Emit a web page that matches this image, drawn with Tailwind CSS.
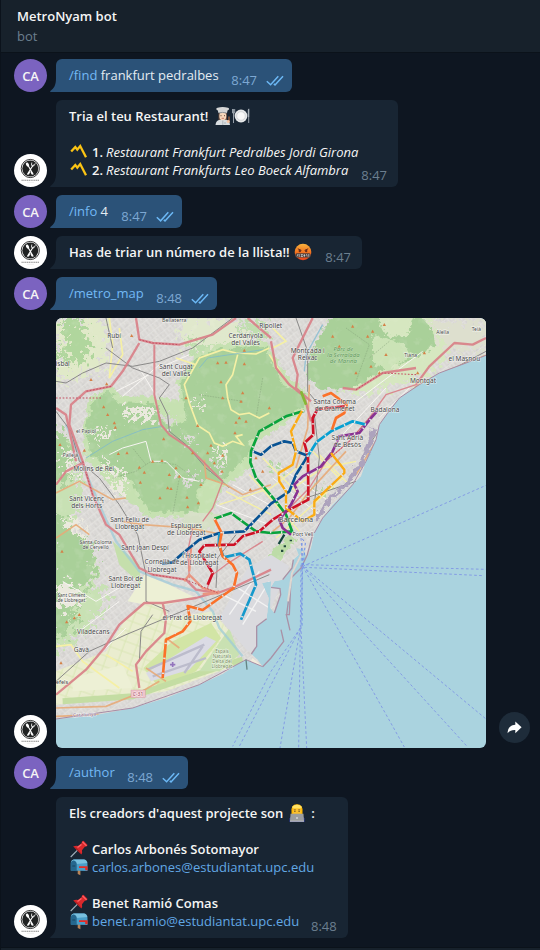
<!DOCTYPE html>
<html lang="ca">
<head>
<meta charset="utf-8">
<title>MetroNyam bot</title>
<script src="https://cdn.jsdelivr.net/npm/@tailwindcss/browser@4"></script>
</head>
<body class="bg-[#0e1621]">
<svg class="absolute size-0">
  <symbol id="tail" viewBox="0 0 6 14"><path d="M6 0V14H.6C-.2 14 0 13.2.6 12.8C4 10.500 6 7 6 0Z" fill="currentColor"/></symbol>
  <symbol id="checks" viewBox="0 0 18 11"><path d="M.8 6.200 4.600 9.800 12.300 1.200M7.800 8.900 9 9.900 17 1.200" fill="none" stroke="#6cb8f5" stroke-width="1.500"/></symbol>
  <symbol id="logo" viewBox="0 0 33 33">
    <circle cx="16.500" cy="16.500" r="16.500" fill="#fff"/>
    <circle cx="16.300" cy="14.500" r="9.100" fill="none" stroke="#252525" stroke-width=".9"/>
    <circle cx="16.300" cy="14.500" r="8" fill="#202222"/>
    <path d="M13.500 10.500 19 20M19.200 11 13.600 20" stroke="#fff" stroke-width="1.100" stroke-linecap="round"/>
    <ellipse cx="13.500" cy="10.600" rx="1.400" ry="2.200" transform="rotate(-30 13.500 10.600)" fill="#fff"/>
    <path d="M17.800 8.500 17.400 11.300Q18.600 13 20.200 11.500L21.300 9.300" fill="none" stroke="#fff" stroke-width=".8"/>
    <path d="M15 17.500 13.400 20.400H15L16.300 17.800 17.700 20.400H19.300L17.600 17.500Z" fill="#fff"/>
    <path d="M7.500 26.200H25.500" stroke="#888" stroke-width="1.100" stroke-dasharray="1.300 .5"/>
    <path d="M13 28.300H20" stroke="#ddd" stroke-width=".5"/>
  </symbol>
  <symbol id="part" viewBox="0 0 18 18"><path d="M1.200 8.500 5.300 4 7.300 6.600 10.200 3 16 14.300" fill="none" stroke="#fbc414" stroke-width="2.300" stroke-linejoin="miter"/></symbol>
  <symbol id="cook" viewBox="0 0 18 18">
    <path d="M4.500 6V13H13V6Z" fill="#61463a"/><path d="M1.500 18Q2 13 6 12.700H12Q15.500 13 16 18Z" fill="#d8dde0"/>
    <ellipse cx="8.800" cy="9" rx="3.500" ry="4.300" fill="#f8d8bc"/><path d="M4.500 6 3.800 3.500Q.8 2 3.500.8Q8.500-.8 14 .8Q16.500 2 13.500 3.500L13 6Q9 4.800 4.500 6Z" fill="#d5d6d6"/>
    <path d="M5 6Q8.500 4.800 12.500 6" stroke="#8c9297" fill="none"/><path d="M7 8.300V9.200M10.500 8.300V9.200" stroke="#493127"/><path d="M7.600 11.300H10" stroke="#b65345" stroke-width=".7"/>
    <path d="M8.800 13.500V18M11 15V17" stroke="#8f999f" stroke-width=".6"/><path d="M15 9.500V14" stroke="#aa6541" stroke-width="1.300"/><circle cx="14.300" cy="14.500" r="1.600" fill="#f5c6a5"/>
  </symbol>
  <symbol id="plate" viewBox="0 0 18 18">
    <circle cx="9" cy="9" r="6.400" fill="#e6e8e9"/><circle cx="9" cy="9" r="4.300" fill="#f8f8f8" stroke="#c8cccf" stroke-width=".7"/>
    <path d="M1.500 6V16M.5 2V6H2.700V2M1.600 2V6M16.700 2V16" fill="none" stroke="#a4adb5" stroke-width=".9"/><path d="M15.800 10V3Q16 1.500 17.200 1.500V10Z" fill="#a4adb5"/>
  </symbol>
  <symbol id="curse" viewBox="0 0 18 18">
    <circle cx="9" cy="9" r="8.300" fill="url(#rage)"/><path d="M3.800 5.800 7.400 7.400M14.200 5.800 10.600 7.400" stroke="#6b2d19" stroke-width="1"/><circle cx="5.800" cy="8" r="1.200" fill="#6b2d19"/><circle cx="12.200" cy="8" r="1.200" fill="#6b2d19"/>
    <rect x="1.400" y="10.300" width="15.200" height="4.200" rx="1.500" fill="#4b3f3b"/><path d="M3 13.500 4 11M5.200 11V14M6.800 11.500H8.600L7 13.500H9M10.300 11V14M9.500 12.500H11.300M12.500 11 13.200 13.500M14.800 11V13.800" fill="none" stroke="#ddd" stroke-width=".7"/>
  </symbol>
  <linearGradient id="rage" x1="0" y1="0" x2="0" y2="1"><stop offset="0" stop-color="#f9b43d"/><stop offset=".5" stop-color="#f27521"/><stop offset="1" stop-color="#e7421c"/></linearGradient>
  <symbol id="coder" viewBox="0 0 18 18">
    <path d="M1.500 18V14.500Q2 12.500 5 12H13Q16 12.500 16.500 14.500V18Z" fill="#303f9f"/><path d="M3.500 8Q3 0 9 .3Q15 0 14.500 8V11H3.500Z" fill="#ffb906"/><path d="M3.800 3Q9-1.500 14.200 3L12.500 4.500H5.500Z" fill="#ffe265"/>
    <path d="M5 5H13V10H5Z" fill="#fbc02d"/><path d="M5.800 5.800H7.800M10.200 5.800H12.200" stroke="#6d4c2f" stroke-width=".7"/><path d="M6.900 6.800V8M11.100 6.800V8" stroke="#533b25"/>
    <path d="M2.500 9.700H15.500L16 17.300H2Z" fill="#9b9d9f"/><circle cx="9" cy="14" r=".8" fill="#fff"/><path d="M2 17.200H16" stroke="#c3c3c3"/>
  </symbol>
  <symbol id="pin" viewBox="0 0 18 18">
    <path d="M.7 17 7.500 10.200" stroke="#a2b2bc" stroke-width="1.100"/><path d="M3.200 6.600Q5.500 5.500 8 6L11.500 3.200Q11.500 1 13.500.8L17.600 5Q17 7 14.800 6.800L12 10.200Q12.600 13 11.300 14.600Z" fill="#d9292c"/>
    <path d="M12.500 1.800 16.500 5.800M7.500 7.500 11.500 4.500" stroke="#ff666a" stroke-width="1.200"/><path d="M4 7Q8 9 11 14" stroke="#991b20" fill="none" stroke-width=".8"/>
  </symbol>
  <symbol id="mail" viewBox="0 0 18 18">
    <path d="M7.700 12H10.400V17.200L7.700 16Z" fill="#b78358"/><path d="M.8 5Q1 2 3.800 1.500H14Q17.500 2 17.500 6V13L.8 12.500Z" fill="#4a9ec9"/><path d="M1 5Q1 2 3.800 1.500H14Q16.500 1.800 17.300 5L6.500 6Q6 2.500 3.500 2.500Z" fill="#78c0df"/>
    <path d="M.8 12.500V5Q1 2.500 3.500 2.500 6.500 3 6.700 6V13.200Z" fill="#25678e"/><path d="M2.300 8H5.200" stroke="#174662"/><path d="M9 8.200H17.600V12.300H15.200V9.900H9Z" fill="#e52b24"/>
  </symbol>
</svg>
<div class="flex h-[950px] w-[540px] flex-col overflow-hidden border-l border-[#0b121b] bg-[#0e1621] font-['Open_Sans','Noto_Sans',sans-serif] text-[13px] leading-[18px] text-[#f5f5f5]">
  <header class="h-[53px] shrink-0 border-b border-[#0b121a] bg-[#17212b] pt-[6px] pl-4">
    <h1 class="font-semibold leading-[20px]">MetroNyam bot</h1>
    <p class="leading-[20px] text-[#6c7f8f]">bot</p>
  </header>
  <main class="flex flex-col gap-2 pt-[6px] pl-[13px]">

    <div class="flex items-end">
      <div class="flex size-[33px] items-center justify-center rounded-full bg-[#7b63c0] font-semibold tracking-[-0.2px]">CA</div>
      <svg class="ml-[3px] h-[14px] w-[6px] text-[#2b5278]"><use href="#tail"/></svg>
      <div class="flex h-[33px] w-[236px] items-end justify-between rounded-md rounded-bl-none bg-[#2b5278] pr-2 pl-[13px]">
        <p class="whitespace-nowrap pb-[8px] text-[#e4ecf2]"><span class="text-[#73b9f5]">/find</span> frankfurt pedralbes</p>
        <div class="flex items-center gap-[9px] pb-[3px] text-[#7da8d3]">8:47<svg class="h-[11px] w-[18px]"><use href="#checks"/></svg></div>
      </div>
    </div>

    <div class="flex items-end">
      <svg class="size-[33px]"><use href="#logo"/></svg>
      <svg class="ml-[3px] h-[14px] w-[6px] text-[#182533]"><use href="#tail"/></svg>
      <div class="flex h-[87px] w-[342px] items-end justify-between rounded-md rounded-bl-none bg-[#182533] pr-[11px] pl-[13px]">
        <div class="whitespace-nowrap pb-[8px]">
          <p class="flex font-semibold">Tria el teu Restaurant!<svg class="ml-[6px] size-[18px]"><use href="#cook"/></svg><svg class="size-[18px]"><use href="#plate"/></svg></p>
          <p class="h-[18px]"></p>
          <p class="flex"><svg class="mr-[4px] ml-[1px] size-[18px]"><use href="#part"/></svg><b class="mr-[3px] font-semibold">1.</b><i class="tracking-[-0.01px]">Restaurant Frankfurt Pedralbes Jordi Girona</i></p>
          <p class="flex"><svg class="mr-[4px] ml-[1px] size-[18px]"><use href="#part"/></svg><b class="mr-[3px] font-semibold">2.</b><i class="tracking-[-0.01px]">Restaurant Frankfurts Leo Boeck Alfambra</i></p>
        </div>
        <span class="pb-[3px] text-[#6c7f8f]">8:47</span>
      </div>
    </div>

    <div class="flex items-end">
      <div class="flex size-[33px] items-center justify-center rounded-full bg-[#7b63c0] font-semibold tracking-[-0.2px]">CA</div>
      <svg class="ml-[3px] h-[14px] w-[6px] text-[#2b5278]"><use href="#tail"/></svg>
      <div class="flex h-[33px] w-[126px] items-end justify-between rounded-md rounded-bl-none bg-[#2b5278] pr-2 pl-[13px]">
        <p class="whitespace-nowrap pb-[8px] text-[#e4ecf2]"><span class="text-[#73b9f5]">/info</span> 4</p>
        <div class="flex items-center gap-[9px] pb-[3px] text-[#7da8d3]">8:47<svg class="h-[11px] w-[18px]"><use href="#checks"/></svg></div>
      </div>
    </div>

    <div class="flex items-end">
      <svg class="size-[33px]"><use href="#logo"/></svg>
      <svg class="ml-[3px] h-[14px] w-[6px] text-[#182533]"><use href="#tail"/></svg>
      <div class="flex h-[33px] w-[306px] items-end justify-between rounded-md rounded-bl-none bg-[#182533] pr-[11px] pl-[13px]">
        <p class="flex whitespace-nowrap pb-[8px] font-semibold">Has de triar un número de la llista!!<svg class="ml-[4px] size-[18px]"><use href="#curse"/></svg></p>
        <span class="pb-[3px] text-[#6c7f8f]">8:47</span>
      </div>
    </div>

    <div class="flex items-end">
      <div class="flex size-[33px] items-center justify-center rounded-full bg-[#7b63c0] font-semibold tracking-[-0.2px]">CA</div>
      <svg class="ml-[3px] h-[14px] w-[6px] text-[#2b5278]"><use href="#tail"/></svg>
      <div class="flex h-[33px] w-[161px] items-end justify-between rounded-md rounded-bl-none bg-[#2b5278] pr-2 pl-[13px]">
        <p class="pb-[8px] text-[#73b9f5]">/metro_map</p>
        <div class="flex items-center gap-[9px] pb-[3px] text-[#7da8d3]">8:48<svg class="h-[11px] w-[18px]"><use href="#checks"/></svg></div>
      </div>
    </div>

    <div class="flex items-end">
      <svg class="size-[33px]"><use href="#logo"/></svg>
      <svg class="ml-[9px] size-[430px] rounded-md" viewBox="0 0 1290 1290">
        <defs>
          <pattern id="streets" width="23" height="19" patternUnits="userSpaceOnUse" patternTransform="rotate(-38)"><path d="M0 2H23M3 0V19M14 4V14" stroke="#f3f1ee" stroke-width="2" fill="none"/></pattern>
          <pattern id="fields" width="37" height="31" patternUnits="userSpaceOnUse" patternTransform="rotate(20)"><path d="M0 3H37M9 0V31" stroke="#d9e6b5" stroke-width="3" fill="none"/></pattern>
          <marker id="peak" markerWidth="12" markerHeight="12" refX="6" refY="6" markerUnits="userSpaceOnUse"><path d="M6 1 11 10H1Z" fill="#d48147"/></marker>
          <filter id="rough" x="-5%" y="-5%" width="110%" height="110%"><feTurbulence type="fractalNoise" baseFrequency=".06" numOctaves="3" seed="4"/><feDisplacementMap in="SourceGraphic" scale="40" xChannelSelector="R" yChannelSelector="G" color-interpolation-filters="sRGB"/></filter>
          <filter id="ragged" x="-5%" y="-5%" width="110%" height="110%" color-interpolation-filters="sRGB"><feTurbulence type="fractalNoise" baseFrequency=".06" numOctaves="4" seed="9"/><feDisplacementMap in="SourceGraphic" scale="100" xChannelSelector="R" yChannelSelector="G"/></filter>
          <clipPath id="shore"><path d="M0 0H1290V112L1230 135 1150 165 1090 200 1030 240 995 285 970 320 960 365 930 430 915 475 890 500 860 530 830 560 800 600 775 645 765 690 752 720 744 695 720 690 728 710 712 725 708 750 690 775 680 785 655 790 645 808 672 812 674 832 655 885 643 870 645 790 618 795 638 840 632 902 602 925 602 985 586 1008 605 1025 620 1046 570 1025 545 1038 500 1068 430 1100 330 1140 230 1170 100 1195 0 1203Z"/></clipPath>
          <filter id="mottle" x="0" y="0" width="100%" height="100%"><feTurbulence type="fractalNoise" baseFrequency=".035" numOctaves="3" seed="7"/><feColorMatrix values="0 0 0 0 .93 0 0 0 0 .93 0 0 0 0 .86 5 0 0 0 -2.700"/></filter>
          <filter id="blocks" x="0" y="0" width="100%" height="100%"><feTurbulence type="fractalNoise" baseFrequency=".07" numOctaves="4" seed="12"/><feColorMatrix values="0 0 0 0 .6 0 0 0 0 .59 0 0 0 0 .58 0 4 0 0 -2"/></filter>
        </defs>
        <rect width="1290" height="1290" fill="#aad3df"/>
        <g clip-path="url(#shore)">
          <rect width="1290" height="1290" fill="#dad8d5"/>
          <rect width="1290" height="1290" filter="url(#blocks)" opacity=".5"/>
          <rect width="1290" height="1290" fill="url(#streets)" opacity=".6"/>
          <g filter="url(#ragged)">
            <path d="M0 0H150L155 130 90 170 0 200Z" fill="#e0e9c8"/>
            <path d="M20 0H75L110 100 60 150 30 110ZM0 80 35 115 10 150Z" fill="#b0d69d"/>
            <path d="M370 0H520L590 70 510 120 430 150 380 80Z" fill="#e0e8cc"/>
            <path d="M400 60 460 80 430 120 400 110ZM540 20 620 10 640 60 590 60Z" fill="#c0deaf"/>
            <path d="M-20 330 45 370 75 500 60 620 130 740 110 800 160 820 100 940-20 1010Z" fill="#c8e1b4"/>
            <path d="M-20 560 60 640 110 690 120 760 80 830 50 930-20 970ZM-20 330 30 350 60 470-20 520Z" fill="#a9d099"/>
            <path d="M820 70 900-20H1130L1210 70 1140 150 1080 190 1000 200 930 230 840 210Z" fill="#d6e7c0"/>
            <path d="M1110 10H1290V100H1170Z" fill="#dddfce"/>
            <path d="M650 440 670 430 680 470 650 470ZM770 520 810 500 800 530Z" fill="#b4d8a3"/>
          </g>
          <g filter="url(#rough)">
            <path d="M90 350 108 255 165 210 205 245 300 245 385 260 372 200 425 120 500 85 640 80 690 170 760 230 765 275 680 340 600 390 600 450 510 520 470 610 290 605 190 530 95 430Z" fill="#c6e1b1"/>
            <path d="M100 345 115 265 165 225 195 262 300 265 325 295 345 330 400 320 385 205 430 130 500 100 640 95 690 210 755 240 750 275 650 335 592 370 585 420 550 455 500 505 465 490 430 530 440 590 290 590 235 500 150 450 110 410Z" fill="#a9d099"/>
            <path d="M760 180 775 110 810 40 860-20H960L1000 60 1060 70 1090-10 1140 50 1150 90 1090 130 960 180 910 215 800 225Z" fill="#a9d099"/>
            <path d="M960 60 1040 80 1080 120 1010 165 960 150Z" fill="#cbe3b6"/>
            <path d="M370 655 480 645 500 600 400 590Z" fill="#d5dfc5"/>
            <path d="M645 720 710 660 730 670 670 750 645 740Z" fill="#bddca8"/>
          </g>
          <g filter="url(#ragged)" fill="#ebe9de">
            <path d="M195 275 290 272 290 300 225 305ZM120 430 200 445 205 480 155 470ZM160 490 210 500 200 535 165 520ZM115 350 160 330 165 350 130 370ZM0 800 60 790 80 840 30 880 0 860ZM20 400 55 420 55 480 30 470ZM400 260 440 240 440 270ZM470 395 520 400 500 430ZM20 610 60 600 90 650 50 650Z"/>
            <path d="M315 290 345 290 350 325 320 325ZM385 350 420 370 400 390ZM460 440 495 430 500 470ZM370 480 420 470 415 495 380 500Z" fill="#d9d8d4"/>
          </g>
          <path d="M70 280H320L560 480 450 590 290 590 90 430ZM360 120 510 90 720 150 700 300 590 430 360 260ZM0 360 70 520 90 760 150 800 90 980 0 980ZM780 0H1100L1130 150 820 220Z" filter="url(#mottle)" opacity=".1"/>
          <path d="M170 480 240 460 285 430M285 430 360 440 430 490M270 440 230 390M370 480 350 590M620 180 600 300M430 230 560 250M870 30 940 80 900 190M1000 70 940 120" fill="none" stroke="#819d76" stroke-width="2" stroke-dasharray="5 3" opacity=".7"/>
          <path d="M0 1060 150 1000 210 900 270 850 320 850 340 900 470 880 520 940 500 1000 570 1030 330 1120 200 1140 0 1160Z" fill="#eaedcf"/>
          <path d="M0 1060 150 1000 210 900 270 850 320 850 340 900 470 880 520 940 500 1000 570 1030 330 1120 200 1140 0 1160Z" fill="url(#fields)"/>
          <path d="M215 850 265 770 340 800 420 840 330 860 270 860ZM50 1080 200 1040 230 1110 50 1120Z" fill="#edf0d5"/>
          <path d="M170 670 250 740 255 800 190 740Z" fill="#c5dfac"/>
          <path d="M262 1050 350 970 465 915 495 960 420 1060 310 1110Z" fill="#d2e5a5"/>
          <path d="M270 1065 450 955 480 970 400 1055 285 1090Z" fill="#dbdbe5"/>
          <path d="M275 1055 445 980M290 1075 450 1020M385 1065 440 985" stroke="#bcbccc" stroke-width="7"/>
          <path d="M20 1150 230 1135 480 1050 560 1025" fill="none" stroke="#c4dda3" stroke-width="18"/>
          <path d="M500 960 520 930 550 1010 490 1060 430 1060Z" fill="#c9e1b2"/>
          <path d="M575 750 645 710 700 745 645 870 600 1000 575 1000 490 900Z" fill="#dadade"/>
          <path d="M520 890 610 760M560 920 640 790M500 830 600 880M530 800 640 870" stroke="#f3f3f3" stroke-width="4"/>
          <path d="M590 1020 620 1046 580 1035ZM600 940H625V970Z" fill="#f1ecdc"/>
          <g fill="none" stroke="#f7f5f2" stroke-width="3">
            <path d="M180 220 280 170M200 235 310 140M250 150 295 225M320 145 400 110M160 410 200 390 270 370 285 430 330 430 380 480 430 490M20 790 120 850 240 780M70 940 190 850M130 1010 210 930M480 560 640 620M530 500 640 560M650 480 790 590M660 440 820 550M900 250 1100 100M860 350 990 210M970 300 1060 210"/>
          </g>
          <g fill="none" stroke="#f5f0a5" stroke-width="5">
            <path d="M160 0 170 80 160 180 200 110 190 30M640 90 600 108 540 105 500 95 430 120 385 200 400 255 425 322 460 345 475 375 500 385 530 370 560 380 540 355 560 350M545 110 530 170 510 200 515 240 525 275 550 290 580 285 610 300 640 285M360 120 420 140M0 985 45 980 80 1030 190 1110M150 1010 230 1060M650 30 690 70 650 90M640 110 690 190"/>
            <path d="M490 560 645 510 760 420M510 520 645 590M580 470 730 640M620 420 750 550M660 660 860 480M640 560 800 450 900 430M760 390 850 480M790 410 880 500" stroke-width="4"/>
          </g>
          <g fill="none" stroke="#79b8d2" stroke-width="4" opacity=".7">
            <path d="M90 420 170 370 260 335 320 325M430 150 455 120 620 95" stroke-width="3"/>
            <path d="M30 320 80 440 130 560 180 670 250 760 350 800 420 820 470 880 490 930 560 1015" stroke="#9bcbd8" stroke-width="7"/>
            <path d="M745 160 750 110 800 20"/>
          </g>
          <g fill="none" stroke="#8a8988" stroke-width="3">
            <path d="M0 280 45 340 70 430 130 480 190 560 245 650M0 190 30 195 80 165 150 135 230 145 310 130 410 90 530 0M150 90 230 150 310 180 340 200 310 240 335 290 340 340 390 380 450 450 500 490 520 510M720 0 755 100 755 220 780 250M150 0 170 90M245 650 270 770 270 850 340 880M0 1090 100 1000 210 950 450 850 640 770M1290 100 1120 190 1020 260 940 380M480 810 485 720 540 650M250 1030 255 940 290 890M750 540 900 490M775 290 790 420 775 560"/>
          </g>
          <g fill="none" stroke="#e7aa78" stroke-width="5" opacity=".9">
            <path d="M0 525 70 490 170 545 210 540M200 610 260 620 400 630 500 650M760 200 755 330 720 450M0 660 60 620 100 650M445 425 450 480 510 500 560 530 645 500M650 640 700 600 760 520 870 400M1290 112 1170 160 1080 205 960 370 900 470"/>
            <path d="M0 1170 150 1165 250 1125 310 1090M270 1050 330 1090M330 960 370 990M0 1195 130 1190"/>
          </g>
          <g fill="none" stroke="#d97f87" stroke-width="7" stroke-linejoin="round" opacity=".9">
            <path d="M240 0 250 65 290 75 370 80 470 50 540 0M250 75 200 160 165 205 90 220 45 260 40 320 80 430 110 530 150 620 190 650 250 750 290 770 390 785 420 815 485 825 540 805 645 755"/>
            <path d="M295 80 295 230 315 320 340 350 400 390 450 440 500 490" stroke-width="6"/>
            <path d="M0 270 30 290 60 430M645 70 660 150 700 200 745 235 765 310M770 0 710 120 725 170 720 210 765 250M0 1130 90 1055 145 990 190 920 265 855 320 855 330 900 325 945 270 1000 240 1040 250 1110M320 855 420 840 490 820M0 500 30 460 80 435M575 0 645 60M1290 60 1250 80 1195 75 1120 145 1080 200M1080 150 980 165 900 215 860 210"/>
            <path d="M1080 200 990 230 940 300 880 370 810 430 760 510 680 590M450 820 470 770 510 740 620 670M500 490 470 570 440 610M410 630 395 700 400 780" stroke-width="4"/>
          </g>
          <path d="M385 790 400 770 440 810 490 825 440 828M400 760 405 690" fill="none" stroke="#e99580" stroke-width="7"/>
          <g stroke="#c44e62" stroke-width="3" fill="none" stroke-dasharray="5 5"><path d="M250 65 290 75 370 80M165 205 90 220M80 430 110 530M290 770 390 785 485 825M900 215 980 165 1080 170M940 300 880 370 810 430M0 240H140"/></g>
          <path fill="none" marker-start="url(#peak)" marker-mid="url(#peak)" marker-end="url(#peak)" d="M227 53 485 135 510 133 495 192 560 225 565 97 500 240 425 323 540 313 570 310 537 345 390 240 565 138 105 185 152 198 143 267 155 290 175 315 178 328 187 407 213 405 265 463 250 448 290 430 318 428 340 470 360 450 335 510 345 512 393 538 370 475 323 363 410 405 475 435 455 405 465 382 500 412 498 460 435 500 427 555 395 567 600 420 620 460 583 515 312 540 253 493 85 397 12 380 830 55 850 85 890 25 935 55 950 40 985 20 945 145 970 165 900 165 1105 105 1085 165 990 110 18 700 50 830 32 912 55 900 15 1035 70 890 640 270 550 300 555 250"/>
        </g>
        <path d="M1290 112 1230 135 1150 165 1090 200 1030 240 995 285 970 320 960 365 930 430 890 500 800 600 775 645M620 1046 570 1025 430 1100 230 1170 0 1203" fill="none" stroke="#a78ba4" stroke-width="3"/>
        <path d="M965 340 957 370 925 445 880 510 835 550 790 610" fill="none" stroke="#ada3bd" stroke-width="12" filter="url(#rough)"/>
        <g fill="none" stroke="#a991a6" stroke-width="4">
          <path d="M770 650 754 710 735 750 705 780 700 890 691 890 702 937M741 700 708 765 692 890M675 935 683 970 645 1020 620 1046M655 885 674 830 672 812 645 808M712 725 708 750 680 785M632 902 602 925 602 985 586 1008"/>
          <path d="M741 700 708 765 696 850" stroke="#ded8d2" stroke-width="6"/>
          <path d="M570 1025 573 1055" stroke="#648584"/>
        </g>
        <g fill="none" stroke="#849ce4" stroke-width="3" stroke-dasharray="8 7">
          <path d="M735 660 740 740 1290 754M745 748 1282 773M740 745 1290 502M740 745 1290 1203M740 745 1235 1287M740 745 1045 1287M735 740 733 930 728 1290M740 745 735 930 752 1290M733 930 672 1290M733 930 645 1060 530 1285M733 930 550 1285"/>
          <path d="M738 675V930M730 650 748 675 742 740" stroke="#6c8ce8"/>
        </g>

        <g fill="none" stroke-width="8" stroke-linejoin="round">
          <g>
            <path d="M745 278 690 295 610 340 585 400 583 433 600 480 660 550 690 590 710 645M710 640 645 645 600 640 545 600 525 585 475 602" stroke="#09a33c"/>
            <path d="M590 400 615 410 645 385 685 370 710 375 720 400 755 413 745 430 720 470 700 520 645 557 565 640 490 645 430 665 375 710 350 733 318 737" stroke="#075293"/>
            <path d="M870 265 785 273 770 300 772 350 745 375 756 415 757 545 700 575 650 605 610 640 560 655 535 680 445 682 430 700 470 765 455 800" stroke="#ce1126"/>
            <path d="M965 278 945 300 910 345 850 355 830 400 795 445 740 475 715 500 725 520 705 560 670 605 680 630 705 650" stroke="#893292"/>
            <path d="M930 320 890 310 825 340 782 372 755 415" stroke="#07a0d2"/>
            <path d="M490 645 488 680 503 718 553 707 580 725 600 800 555 905" stroke="#1699cc"/>
            <path d="M740 275 705 340 720 400 710 440 668 465 670 490 690 520 690 570 740 610 775 590 775 550 865 465 865 455 825 405" stroke="#fbab13" stroke-width="7"/>
            <path d="M800 235 825 225 872 260 865 285 840 300 828 335M475 602 497 645 490 680 500 715 530 740 543 765 533 810 440 876 395 864 403 910 380 940 330 965 320 1080" stroke="#fb7129"/>
            <path d="M735 220 750 260" stroke="#86b735"/>
            <path d="M685 650 668 678" stroke="#12443e" stroke-width="7"/>
          </g>
          <g stroke="#e5e3df" stroke-width="7" stroke-dasharray="4 29">
            <path d="M745 278 690 295 610 340 585 400 583 433 600 480 660 550 710 645 600 640 525 585 475 602M590 400 615 410 645 385 685 370 710 375 720 400 755 413 700 520 645 557 565 640 490 645 430 665 375 710 350 733M870 265 785 273 770 300 772 350 745 375 756 415 757 545 650 605 610 640 560 655 535 680 445 682 430 700 470 765M965 278 910 345 850 355 795 445 715 500 725 520 670 605M930 320 890 310 825 340 782 372 755 415M503 718 553 707 580 725 600 800 555 905"/>
            <path d="M740 275 705 340 720 400 668 465 690 520 690 570 740 610 775 590 775 550 865 465M475 602 497 645 490 680 503 718 543 765 533 810 440 876 395 864 403 910 330 965 320 1080" stroke-dasharray="4 41"/>
          </g>
        </g>
        <path d="M683 682H690V688H683ZM675 695H682V702H675ZM701 665H708V670H701Z" fill="#234b3e"/>
        <path d="M350 1032V1047M342 1040H358" stroke="#9373bd" stroke-width="5"/>
        <rect x="225" y="1116" width="43" height="23" fill="#efc3ca" stroke="#c98b97"/>
        <g fill="#464646" stroke="#ffffffb0" stroke-width="3" paint-order="stroke" text-anchor="middle" font-family="Noto Sans" font-size="19.5">
          <text x="174" y="60">Rubí</text><text x="355" y="13" font-size="16">Bellaterra</text>
          <text x="569" y="61">Cerdanyola</text><text x="569" y="82">del Vallès</text><text x="644" y="31">Ripollet</text>
          <text x="360" y="153">Sant Cugat</text><text x="360" y="174">del Vallès</text><text x="20" y="145">isbal</text>
          <text x="90" y="344" font-size="15">el Papiol</text><text x="43" y="416" font-size="15">Pallejà</text><text x="113" y="460">Molins de Rei</text>
          <text x="92" y="550">Sant Vicenç</text><text x="92" y="571">dels Horts</text><text x="221" y="611">Sant Feliu de</text><text x="221" y="632">Llobregat</text>
          <text x="391" y="629">Esplugues</text><text x="391" y="650">de Llobregat</text><text x="119" y="677" font-size="15">Santa Coloma</text><text x="119" y="692" font-size="15">de Cervelló</text>
          <text x="267" y="696">Sant Joan Despí</text><text x="318" y="739">Cornellà de</text><text x="318" y="761">Llobregat</text><text x="430" y="719">l'Hospitalet</text><text x="430" y="740">de Llobregat</text>
          <text x="209" y="788">Sant Boi de</text><text x="209" y="809">Llobregat</text><text x="46" y="836" font-size="14">Sant Climent</text><text x="46" y="851" font-size="14">de Llobregat</text>
          <text x="112" y="947">Viladecans</text><text x="76" y="1003">Gavà</text><text x="409" y="905">el Prat de Llobregat</text><text x="18" y="1098" font-size="17">efels</text>
          <text x="755" y="105">Montcada i</text><text x="755" y="126">Reixac</text><text x="836" y="259">Santa Coloma</text><text x="836" y="280">de Gramenet</text><text x="987" y="281">Badalona</text>
          <text x="874" y="365">Sant Adrià</text><text x="874" y="387">de Besòs</text><text x="720" y="613" font-size="22">Barcelona</text><text x="741" y="655" font-size="16">Port Vell</text>
          <text x="1101" y="195">Montgat</text><text x="1225" y="129">el Masnou</text><text x="1160" y="49" font-size="15">Alella</text><text x="1064" y="116" font-size="15">Tiana</text><text x="1261" y="39" font-size="15">Teià</text>
          <text x="246" y="1134" font-size="15" fill="#9b354d">C-31</text><text x="86" y="1195" font-size="15" fill="#80678f" transform="rotate(-3 86 1195)">Catalunya</text>
          <g fill="#52924d" font-size="18" font-style="italic" stroke-width="1"><text x="862" y="98">Parc de</text><text x="862" y="116">la Serralada</text><text x="862" y="134">de Marina</text></g>
          <g fill="#758a5b" font-size="14"><text x="498" y="1005">Espais</text><text x="498" y="1020">Naturals</text><text x="498" y="1035">Delta del</text><text x="498" y="1050">Llobregat</text></g>
        </g>
      </svg>
      <div class="mb-[5px] ml-[13px] flex size-[31px] items-center justify-center rounded-full bg-[#1e2c3a]">
        <svg class="h-[13px] w-[15px]" viewBox="0 0 15 13"><path d="M8.300.4 14.600 6.200 8.300 12.200V8.900C4.700 8.700 2.700 9.700.6 12.200.7 7.600 3 4 8.300 3.800Z" fill="#fff"/></svg>
      </div>
    </div>

    <div class="flex items-end">
      <div class="flex size-[33px] items-center justify-center rounded-full bg-[#7b63c0] font-semibold tracking-[-0.2px]">CA</div>
      <svg class="ml-[3px] h-[14px] w-[6px] text-[#2b5278]"><use href="#tail"/></svg>
      <div class="flex h-[33px] w-[132px] items-end justify-between rounded-md rounded-bl-none bg-[#2b5278] pr-2 pl-[13px]">
        <p class="pb-[8px] text-[#73b9f5]">/author</p>
        <div class="flex items-center gap-[9px] pb-[3px] text-[#7da8d3]">8:48<svg class="h-[11px] w-[18px]"><use href="#checks"/></svg></div>
      </div>
    </div>

    <div class="flex items-end">
      <svg class="size-[33px]"><use href="#logo"/></svg>
      <svg class="ml-[3px] h-[14px] w-[6px] text-[#182533]"><use href="#tail"/></svg>
      <div class="flex h-[141px] w-[292px] items-end rounded-md rounded-bl-none bg-[#182533] pr-[11px] pl-[13px]">
        <div class="w-[242px] shrink-0 whitespace-nowrap pb-[8px] font-semibold">
          <p class="flex">Els creadors d'aquest projecte son<svg class="mr-[5px] ml-[5px] size-[18px] shrink-0"><use href="#coder"/></svg>:</p>
          <p class="h-[18px]"></p>
          <p class="flex"><svg class="mr-[4px] ml-[1px] size-[18px] shrink-0"><use href="#pin"/></svg>Carlos Arbonés Sotomayor</p>
          <p class="flex font-normal text-[#62a8e5]"><svg class="mr-[4px] ml-[1px] size-[18px] shrink-0"><use href="#mail"/></svg>carlos.arbones@estudiantat.upc.edu</p>
          <p class="h-[18px]"></p>
          <p class="flex"><svg class="mr-[4px] ml-[1px] size-[18px] shrink-0"><use href="#pin"/></svg>Benet Ramió Comas</p>
          <p class="flex font-normal text-[#62a8e5]"><svg class="mr-[4px] ml-[1px] size-[18px] shrink-0"><use href="#mail"/></svg>benet.ramio@estudiantat.upc.edu</p>
        </div>
        <span class="pb-[3px] text-[#6c7f8f]">8:48</span>
      </div>
    </div>
  </main>
  <footer class="mt-auto h-[3px] shrink-0 border-t border-[#0b121a] bg-[#17212b]"></footer>
</div>
</body>
</html>
